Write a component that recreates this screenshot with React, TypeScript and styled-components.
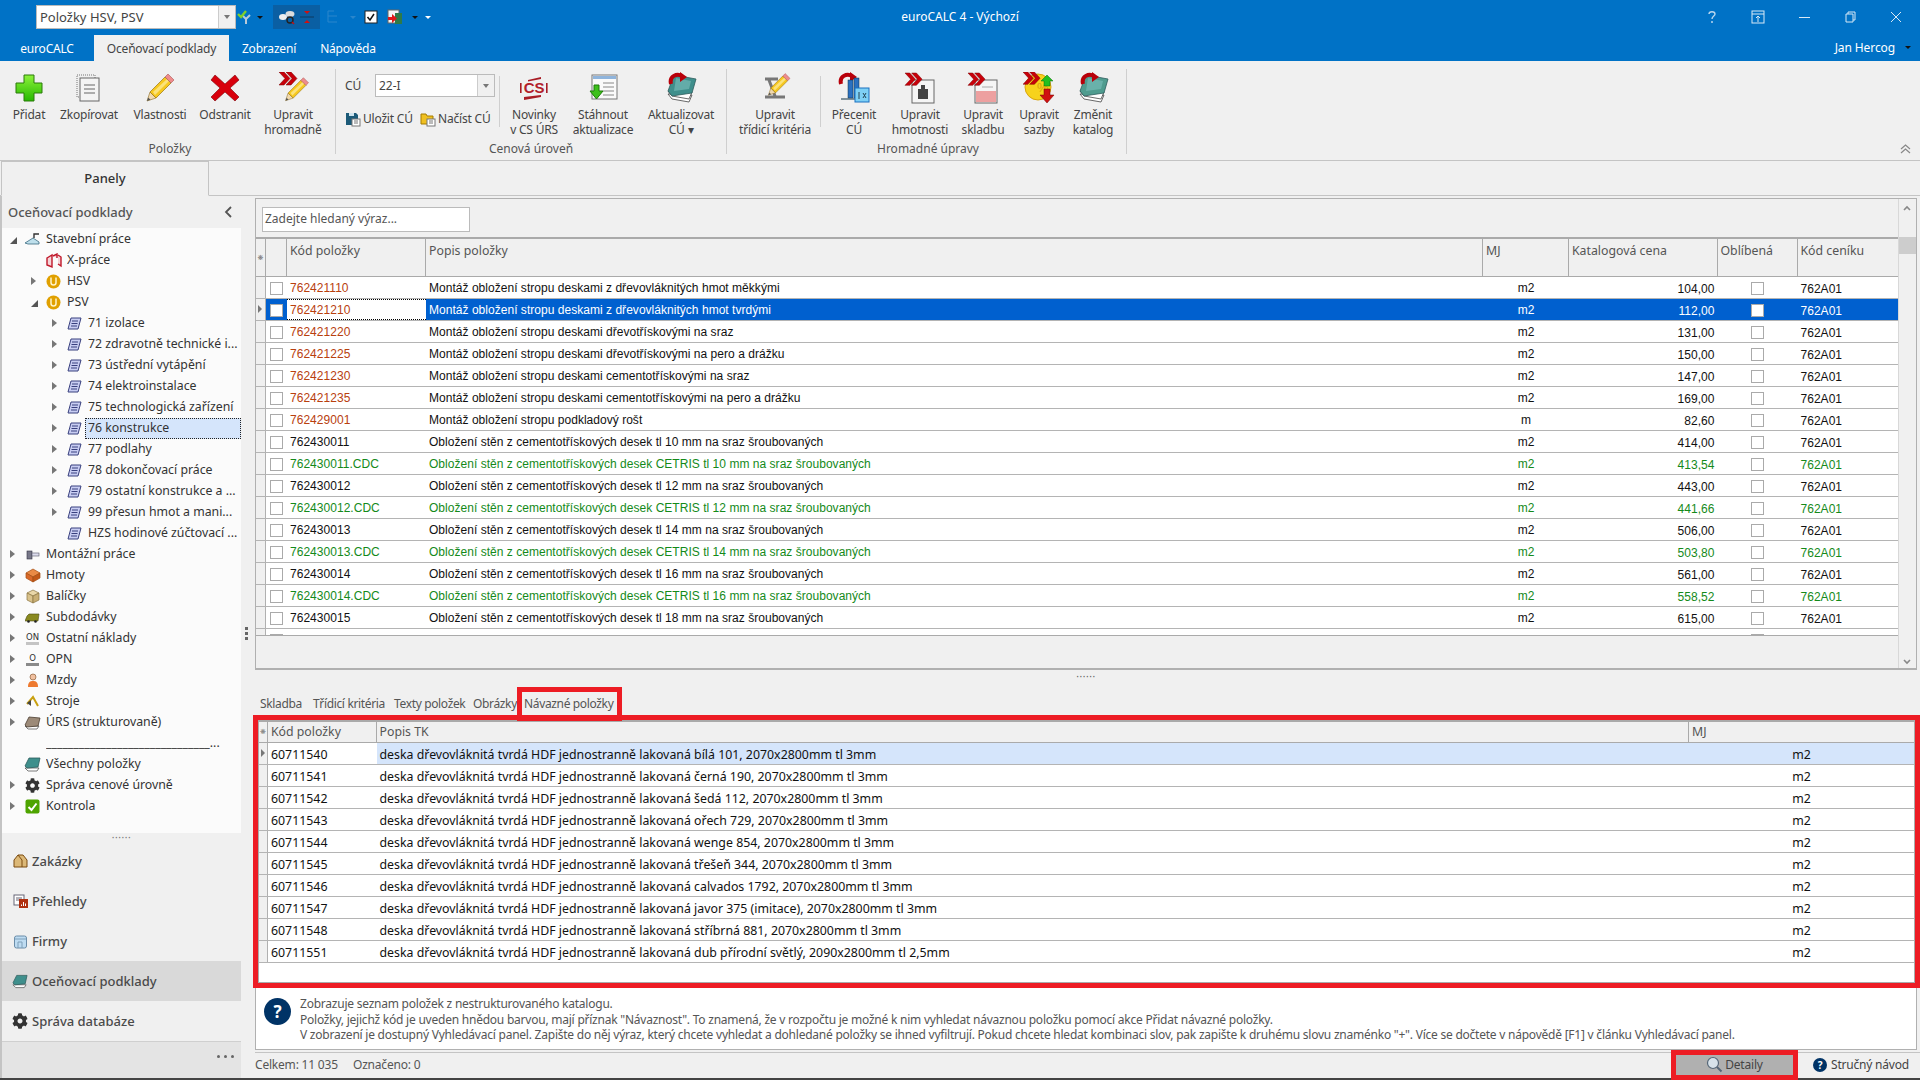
import React from 'react';
import styled, { createGlobalStyle } from 'styled-components';
import { FaCog } from 'react-icons/fa';

const UI = '"Noto Sans", "Open Sans", sans-serif';
const TOP_COLS = '10px 21px 139px 1057px 86px 148.5px 80px 1fr';
const DETAIL_COLS = '9px 108.5px 1312.5px 1fr';
const RED = '#ed1c24';

const Global = createGlobalStyle`
  html, body { margin: 0; background: #f0f0f0; }
  *, *::before, *::after { box-sizing: border-box; }
`;

/* ─── Shell ─────────────────────────── */

const Root = styled.div`
  width: 1920px;
  height: 1080px;
  overflow: hidden;
  display: flex;
  flex-direction: column;
  font-family: ${UI};
  font-size: 12px;
  background: #f0f0f0;
  color: #444;
`;

const TitleBar = styled.div`
  height: 35px;
  background: #0072c6;
  display: grid;
  grid-template-columns: 1fr auto 1fr;
  align-items: start;
`;

const Qat = styled.div`
  display: flex;
  align-items: center;
  height: 24px;
  margin-top: 5px;
  padding-left: 36px;
`;

const QatCombo = styled.div`
  width: 200px;
  height: 24px;
  background: #fff;
  border: 1px solid #bbb;
  color: #444;
  font-size: 13px;
  line-height: 22px;
  padding-left: 3px;
  display: flex;
  justify-content: space-between;
`;

const ComboArrow = styled.div`
  width: 17px;
  border-left: 1px solid #ccc;
  background: #f0f0f0;
  display: flex;
  align-items: center;
  justify-content: center;
  &::after {
    content: '';
    border: 3px solid transparent;
    border-top: 4px solid #777;
    border-bottom: 0;
  }
`;

const QatSlot = styled.div<{ $w: number; $on?: boolean }>`
  width: ${({ $w }) => $w}px;
  height: 24px;
  display: flex;
  align-items: center;
  justify-content: center;
  gap: 3px;
  background: ${({ $on }) => ($on ? '#0a5fa3' : 'transparent')};
`;

const Caret = styled.span<{ $c?: string }>`
  border: 3px solid transparent;
  border-top: 3px solid ${({ $c }) => $c ?? '#111'};
  border-bottom: 0;
`;

const WindowTitle = styled.div`
  color: #fff;
  font-size: 12px;
  line-height: 34px;
`;

const WindowControls = styled.div`
  display: flex;
  justify-content: flex-end;
  padding: 8px 1px 0 0;
`;

const WinBtn = styled.div<{ $w: number }>`
  width: ${({ $w }) => $w}px;
  height: 18px;
  display: flex;
  align-items: center;
  justify-content: center;
  color: #cfe4f5;
`;

const TabStrip = styled.div`
  height: 26px;
  background: #0072c6;
  display: flex;
  align-items: stretch;
`;

const RibbonTab = styled.div<{ $w: number; $active?: boolean }>`
  width: ${({ $w }) => $w}px;
  text-align: center;
  line-height: 27px;
  font-size: 12px;
  letter-spacing: -0.2px;
  color: ${({ $active }) => ($active ? '#444' : '#fff')};
  background: ${({ $active }) => ($active ? '#f0f0f0' : 'transparent')};
`;

const UserName = styled.div`
  margin-left: auto;
  padding-right: 9px;
  display: flex;
  align-items: center;
  gap: 10px;
  color: #fff;
  font-size: 12px;
  letter-spacing: -0.1px;
  height: 24px;
`;

/* ─── Ribbon ────────────────────────── */

const Ribbon = styled.div`
  height: 100px;
  display: flex;
  align-items: flex-start;
  border-bottom: 1px solid #c4c4c4;
`;

const Group = styled.div<{ $w: number; $pad?: number }>`
  width: ${({ $w }) => $w}px;
  height: 85px;
  margin-top: 8px;
  border-right: 1px solid #cfcfcf;
  display: flex;
  flex-direction: column;
  padding-left: ${({ $pad }) => $pad ?? 0}px;
`;

const GroupBody = styled.div`
  height: 73px;
  display: flex;
  align-items: flex-start;
`;

const GroupLabel = styled.div`
  height: 12px;
  line-height: 14px;
  text-align: center;
  font-size: 12px;
  color: #555;
`;

const RibbonBtn = styled.div<{ $w: number }>`
  width: ${({ $w }) => $w}px;
  padding-top: 3px;
  display: flex;
  flex-direction: column;
  align-items: center;
  text-align: center;
  line-height: 15px;
  font-size: 12px;
  letter-spacing: -0.2px;
  color: #444;
  white-space: pre-line;
`;

const BtnIcon = styled.div`
  height: 32px;
  margin-bottom: 3px;
  display: flex;
  align-items: center;
  justify-content: center;
`;

const InnerSep = styled.div`
  width: 1px;
  height: 51px;
  margin-top: 7px;
  background: #cfcfcf;
`;

const CuBlock = styled.div`
  width: 163px;
  padding: 5px 0 0 9px;
  display: flex;
  flex-direction: column;
  gap: 10px;
`;

const CuRow = styled.div`
  display: flex;
  align-items: center;
  height: 23px;
`;

const CuLabel = styled.div`
  width: 30px;
`;

const CuCombo = styled.div`
  width: 120px;
  height: 23px;
  border: 1px solid #bbb;
  background: #fff;
  padding-left: 3px;
  line-height: 21px;
  display: flex;
  justify-content: space-between;
`;

const CuAction = styled.div<{ $w: number }>`
  width: ${({ $w }) => $w}px;
  display: flex;
  align-items: center;
  gap: 2px;
  letter-spacing: -0.2px;
  white-space: nowrap;
`;

const CollapseBtn = styled.div`
  margin: auto 9px 9px auto;
  align-self: flex-end;
  height: 10px;
`;

/* ─── Body ──────────────────────────── */

const PanelHead = styled.div`
  height: 35px;
  border-bottom: 1px solid #c4c4c4;
  display: flex;
  padding-left: 1px;
`;

const PanelTab = styled.div`
  width: 208px;
  height: 35px;
  background: #f0f0f0;
  border: 1px solid #c4c4c4;
  border-bottom-color: #f0f0f0;
  text-align: center;
  line-height: 33px;
  font-size: 13px;
  font-weight: 500;
  color: #333;
`;

const Body = styled.div`
  flex: 1;
  min-height: 0;
  display: flex;
`;

const Sidebar = styled.aside`
  width: 255px;
  display: flex;
  flex-direction: column;
  border-left: 2px solid #c4c4c4;
  position: relative;
`;

const SideHeader = styled.div`
  height: 32px;
  width: 239px;
  padding: 0 8px 0 6px;
  display: flex;
  align-items: center;
  justify-content: space-between;
  font-size: 13px;
  font-weight: 500;
  color: #555;
`;

const Tree = styled.div`
  width: 239px;
  height: 605px;
  padding-top: 1px;
  background: #fbfbfb;
  overflow: hidden;
`;

const TreeRow = styled.div<{ $level: number }>`
  height: 21px;
  display: flex;
  align-items: center;
  padding-left: ${({ $level }) => 6 + 21 * $level}px;
  color: #333;
  font-size: 12.3px;
  white-space: nowrap;
`;

const TreeArrow = styled.div<{ $state: string }>`
  width: 10px;
  height: 10px;
  position: relative;
  &::after {
    content: ${({ $state }) => ($state === 'none' ? 'none' : "''")};
    position: absolute;
    ${({ $state }) =>
      $state === 'open'
        ? `right: 1px; bottom: 1px; border-style: solid; border-width: 0 0 7px 7px;
           border-color: transparent transparent #555 transparent;`
        : `left: 2px; top: 0; border-style: solid; border-width: 4.5px 0 4.5px 5px;
           border-color: transparent transparent transparent #777;`}
  }
`;

const TreeIcon = styled.div`
  width: 17px;
  margin-left: 6px;
  height: 16px;
  display: flex;
  align-items: center;
  justify-content: center;
`;

const TreeText = styled.div<{ $sel?: boolean }>`
  margin-left: ${({ $sel }) => ($sel ? 2 : 5)}px;
  flex: 1;
  height: 21px;
  line-height: 20px;
  overflow: hidden;
  padding-left: ${({ $sel }) => ($sel ? 3 : 0)}px;
  background: ${({ $sel }) => ($sel ? '#d5e5fb' : 'transparent')};
  outline: ${({ $sel }) => ($sel ? '1px dotted #222' : 'none')};
  outline-offset: -1px;
`;

const SplitDots = styled.div`
  height: 8px;
  width: 239px;
  display: flex;
  justify-content: center;
  align-items: center;
  color: #777;
  font-size: 10px;
  letter-spacing: 0.6px;
  line-height: 4px;
`;

const SideNav = styled.nav`
  width: 239px;
`;

const NavItem = styled.div<{ $active?: boolean }>`
  height: 40px;
  display: flex;
  align-items: center;
  gap: 4px;
  padding-left: 10px;
  font-size: 13px;
  font-weight: 500;
  color: #4a4a4a;
  background: ${({ $active }) => ($active ? '#d9d9d9' : 'transparent')};
`;

const NavIcon = styled.div`
  width: 16px;
  display: flex;
  justify-content: center;
`;

const NavFooter = styled.div`
  flex: 1;
  width: 239px;
  border-top: 1px solid #cfcfcf;
  background: #e4e4e4;
  display: flex;
  justify-content: flex-end;
  align-items: center;
  padding: 0 7px 8px 0;
  gap: 4px;
`;

const NavDot = styled.span`
  width: 3px;
  height: 3px;
  border-radius: 50%;
  background: #666;
`;

const GripV = styled.div`
  position: absolute;
  left: 243px;
  top: 431px;
  display: flex;
  flex-direction: column;
  gap: 2px;
  & > i {
    width: 3px;
    height: 3px;
    background: #666;
    display: block;
  }
`;

const Main = styled.main`
  flex: 1;
  min-width: 0;
  display: flex;
  flex-direction: column;
  padding-top: 2px;
`;

const TopPanel = styled.section`
  height: 472px;
  margin-right: 3px;
  border: 1px solid #b0b0b0;
  border-bottom-width: 2px;
  display: flex;
`;

const TopLeft = styled.div`
  flex: 1;
  min-width: 0;
  display: flex;
  flex-direction: column;
`;

const SearchZone = styled.div`
  height: 38px;
  padding: 8px 0 0 6px;
`;

const SearchBox = styled.div`
  width: 208px;
  height: 25px;
  background: #fff;
  border: 1px solid #bbb;
  padding-left: 2px;
  line-height: 22px;
  color: #555;
  font-size: 12px;
`;

const Scrollbar = styled.div`
  width: 18px;
  border-left: 1px solid #d8d8d8;
  background: #f0f0f0;
  display: flex;
  flex-direction: column;
  align-items: center;
  position: relative;
`;

const ScrollThumb = styled.div`
  position: absolute;
  left: 0;
  top: 38px;
  width: 100%;
  height: 17px;
  background: #cdcdcd;
`;

const ScrollArrow = styled.div<{ $down?: boolean }>`
  position: absolute;
  ${({ $down }) => ($down ? 'bottom: 3px;' : 'top: 6px;')}
  left: 4px;
  line-height: 0;
`;

const HeadRow = styled.div<{ $cols: string; $h: number }>`
  height: ${({ $h }) => $h}px;
  display: grid;
  grid-template-columns: ${({ $cols }) => $cols};
  border-top: 2px solid #aaa;
  border-bottom: 1px solid #aaa;
  background: #f0f0f0;
  color: #555;
`;

const HeadCell = styled.div<{ $top?: boolean }>`
  border-right: 1px solid #aaa;
  padding: ${({ $top }) => ($top ? '4px' : '2px')} 3px 0;
  font-size: 12.3px;
  line-height: 16px;
  white-space: nowrap;
  overflow: hidden;
  &:last-child {
    border-right: 0;
  }
`;

const StarCell = styled.div`
  border-right: 1px solid #aaa;
  display: flex;
  align-items: center;
  justify-content: center;
  font-family: 'DejaVu Sans', sans-serif;
  font-size: 7px;
  color: #777;
`;

const Rows = styled.div<{ $h: number }>`
  height: ${({ $h }) => $h}px;
  overflow: hidden;
  background: #fff;
  border-bottom: 1px solid #aaa;
`;

const Row = styled.div<{ $cols: string; $sel?: boolean }>`
  height: 22px;
  display: grid;
  grid-template-columns: ${({ $cols }) => $cols};
  border-bottom: 1px solid #b4b4b4;
  align-items: stretch;
  position: relative;
`;

const Indicator = styled.div<{ $mark?: boolean }>`
  background: #f0f0f0;
  border-right: 1px solid #b0b0b0;
  position: relative;
  &::after {
    content: ${({ $mark }) => ($mark ? "''" : 'none')};
    position: absolute;
    left: 2px;
    top: 6px;
    border-style: solid;
    border-width: 4px 0 4px 4px;
    border-color: transparent transparent transparent #777;
  }
`;

const Cell = styled.div<{
  $c?: string;
  $bg?: string;
  $align?: string;
  $focus?: boolean;
  $size?: number;
  $drop?: number;
}>`
  padding: ${({ $drop }) => $drop ?? 1}px 3px 0;
  line-height: 21px;
  white-space: nowrap;
  overflow: hidden;
  font-family: ${({ $size }) => ($size ? UI : '"Liberation Sans", sans-serif')};
  font-size: ${({ $size }) => $size ?? 12}px;
  letter-spacing: ${({ $size }) => ($size ? '0' : '0.03px')};
  text-align: ${({ $align }) => $align ?? 'left'};
  color: ${({ $c }) => $c ?? '#111'};
  background: ${({ $bg }) => $bg ?? 'transparent'};
  border-top: ${({ $focus }) => ($focus ? '1px dotted #000' : '0')};
  border-bottom: ${({ $focus }) => ($focus ? '1px dotted #000' : '0')};
`;

const CheckCell = styled.div<{ $bg?: string }>`
  display: flex;
  align-items: center;
  padding: 1px 0 0 4px;
  background: ${({ $bg }) => $bg ?? 'transparent'};
`;

const Check = styled.div`
  width: 13px;
  height: 13px;
  background: #fff;
  border: 1px solid #aaa;
`;

const CheckCenter = styled(CheckCell)`
  justify-content: center;
  padding-left: 0;
`;

const FillBar = styled.div`
  flex: 1;
`;

const DotsRow = styled.div`
  height: 12px;
  margin-top: 2px;
  text-align: center;
  font-size: 10px;
  line-height: 8px;
  color: #666;
  letter-spacing: 0.6px;
  padding-right: 3px;
`;

const DetailTabs = styled.div`
  height: 31px;
  display: flex;
  align-items: flex-end;
  padding: 0 0 3px 5px;
  color: #555;
  font-size: 12px;
  letter-spacing: -0.35px;
`;

const DetailTab = styled.div<{ $w: number; $marked?: boolean }>`
  width: ${({ $w }) => $w}px;
  position: relative;
  white-space: nowrap;
  line-height: 16px;
  &::after {
    content: ${({ $marked }) => ($marked ? "''" : 'none')};
    position: absolute;
    left: -7px;
    top: -9px;
    width: 105px;
    height: 34px;
    border: 5px solid ${RED};
    z-index: 2;
  }
`;

const DetailFrame = styled.section`
  height: 273px;
  margin-left: -2px;
  border: 5px solid ${RED};
`;

const DetailInner = styled.div`
  height: 263px;
  border: 1px solid #aaa;
  border-top: 0;
  background: #fff;
  display: flex;
  flex-direction: column;
`;

const HelpPanel = styled.div`
  height: 62px;
  margin-right: 3px;
  background: #fff;
  border: 1px solid #b0b0b0;
  border-top: 0;
  display: flex;
  padding: 9px 0 0 8px;
  gap: 9px;
  color: #555;
  font-size: 12px;
  line-height: 15.5px;
  letter-spacing: -0.23px;
`;

const HelpMark = styled.div`
  width: 27px;
  height: 27px;
  border-radius: 50%;
  background: #003366;
  color: #fff;
  font-weight: 700;
  font-size: 17px;
  line-height: 27px;
  text-align: center;
  flex-shrink: 0;
  margin-top: 1px;
`;

const HelpText = styled.div`
  white-space: nowrap;
  margin-top: -1px;
`;

const StatusBar = styled.div`
  flex: 1;
  margin-top: 2px;
  border-top: 1px solid #c4c4c4;
  display: flex;
  align-items: center;
  padding-bottom: 2px;
  color: #555;
  font-size: 12px;
  letter-spacing: -0.2px;
`;

const StatusText = styled.div<{ $w: number }>`
  width: ${({ $w }) => $w}px;
  white-space: nowrap;
`;

const DetailBtn = styled.div`
  margin-left: auto;
  width: 117px;
  height: 20px;
  background: #b0b0b0;
  display: flex;
  align-items: center;
  justify-content: center;
  gap: 2px;
  position: relative;
  color: #444;
  &::after {
    content: '';
    position: absolute;
    inset: -5px;
    border: 5px solid ${RED};
  }
`;

const GuideBtn = styled.div`
  width: 127px;
  padding-left: 20px;
  display: flex;
  align-items: center;
  gap: 4px;
  color: #444;
`;

const GuideMark = styled.span`
  width: 14px;
  height: 14px;
  border-radius: 50%;
  background: #003366;
  color: #fff;
  font-weight: 700;
  font-size: 10px;
  line-height: 14px;
  text-align: center;
`;

const BottomEdge = styled.div`
  height: 2px;
  background: #444;
`;

/* ─── Icon pieces ───────────────────── */

const Pencil = ({ x = 0, y = 0, s = 1 }: { x?: number; y?: number; s?: number }) => (
  <g transform={`translate(${x} ${y}) scale(${s})`}>
    <polygon points="3,29 6,20 12,26" fill="#f0d9b0" stroke="#8a6a20" strokeWidth="0.6" />
    <polygon points="3,29 4.2,25.5 6.5,27.8" fill="#555" />
    <polygon points="6,20 21,5 27,11 12,26" fill="#f6c81e" stroke="#9a7410" strokeWidth="0.7" />
    <polygon points="9,20 23,7 25,9 11,23" fill="#fbe27a" />
    <polygon points="21,5 24,2 30,8 27,11" fill="#ee8c8c" stroke="#a55" strokeWidth="0.6" />
  </g>
);

const Chevrons = ({ x = 0, y = 0, s = 1 }: { x?: number; y?: number; s?: number }) => (
  <g transform={`translate(${x} ${y}) scale(${s})`} fill="#c8000a" stroke="#700" strokeWidth="0.5">
    <polygon points="0,0 5,0 11,6.5 5,13 0,13 6,6.5" />
    <polygon points="7,0 12,0 18,6.5 12,13 7,13 13,6.5" />
  </g>
);

const RedTurn = ({ x = 0, y = 0 }: { x?: number; y?: number }) => (
  <g transform={`translate(${x} ${y})`}>
    <path d="M3 12 C1 4 9 1 14 4" fill="none" stroke="#b8000a" strokeWidth="4" />
    <polygon points="12,0 19,5 12,10" fill="#b8000a" />
  </g>
);

const TealBook = ({ x = 0, y = 0, c = '#3f8f8c' }: { x?: number; y?: number; c?: string }) => (
  <g transform={`translate(${x} ${y})`}>
    <polygon points="3,22 7,27 24,30 27,23" fill="#fff" stroke="#444" strokeWidth="0.8" />
    <polygon points="3,19 7,24 24,27 27,20" fill="#fff" stroke="#444" strokeWidth="0.8" />
    <polygon points="9,3 31,7 27,21 7,24 3,19" fill={c} stroke="#2c5c5c" strokeWidth="0.8" />
    <polygon points="11,6 26,9 24,17 9,19" fill="#7cc0bd" opacity="0.6" />
  </g>
);

const Icon32 = ({ children }: { children: React.ReactNode }) => (
  <svg width="32" height="32" viewBox="0 0 32 32">
    {children}
  </svg>
);

const PlusIcon = () => (
  <Icon32>
    <defs>
      <linearGradient id="gp" x1="0" y1="0" x2="0" y2="1">
        <stop offset="0" stopColor="#8cf23a" />
        <stop offset="1" stopColor="#26b800" />
      </linearGradient>
    </defs>
    <polygon
      points="11,3 21,3 21,11 29,11 29,21 21,21 21,29 11,29 11,21 3,21 3,11 11,11"
      fill="url(#gp)"
      stroke="#2b7a0b"
    />
  </Icon32>
);

const CopyIcon = () => (
  <Icon32>
    <rect x="4" y="3" width="18" height="22" fill="none" stroke="#777" strokeDasharray="1 1" />
    <rect x="7" y="6" width="19" height="23" fill="#f4f4f4" stroke="#666" />
    <path d="M11 13h11M11 17h11M11 21h11" stroke="#666" />
  </Icon32>
);

const PencilIcon = () => (
  <Icon32>
    <Pencil />
  </Icon32>
);

const CrossIcon = () => (
  <Icon32>
    <polygon
      points="6,3 16,12 26,3 30,8 21,16 30,25 26,29 16,20 6,29 2,25 11,16 2,8"
      fill="#d8000c"
      stroke="#7a0006"
      strokeWidth="0.6"
    />
  </Icon32>
);

const BulkPencilIcon = () => (
  <Icon32>
    <Chevrons x={2} y={0} s={1} />
    <Pencil x={6} y={4} s={0.85} />
  </Icon32>
);

const CsIcon = () => (
  <svg width="34" height="32" viewBox="0 0 34 32">
    <polygon points="11,8 24,5 24,7 11,9.5" fill="#a81c24" />
    <polygon points="7,25 24,23 24,25 7,28" fill="#a81c24" />
    <rect x="3" y="11" width="1.6" height="10" fill="#a81c24" />
    <rect x="29" y="11" width="1.6" height="10" fill="#a81c24" />
    <text
      x="17"
      y="21"
      textAnchor="middle"
      fontFamily="'Liberation Sans', sans-serif"
      fontWeight="700"
      fontSize="15"
      fill="#b3202a"
    >
      CS
    </text>
  </svg>
);

const DownloadIcon = () => (
  <Icon32>
    <rect x="5" y="3" width="25" height="24" fill="#fafafa" stroke="#777" />
    <rect x="6" y="4" width="23" height="3" fill="#8fb4dc" />
    <path d="M16 11h11M16 15h11M16 19h11M16 23h11" stroke="#888" />
    <polygon points="3,19 7,19 7,13 12,13 12,19 16,19 9.5,27" fill="#3cc01a" stroke="#1d7a08" />
  </Icon32>
);

const RefreshBookIcon = () => (
  <Icon32>
    <TealBook />
    <RedTurn x={3} y={0} />
  </Icon32>
);

const SortIcon = () => (
  <Icon32>
    <path d="M6 7h13M10 8l6 16M6 25h20" stroke="#777" strokeWidth="3" fill="none" />
    <Pencil x={7} y={0} s={0.8} />
  </Icon32>
);

const RepriceIcon = () => (
  <Icon32>
    <RedTurn x={0} y={0} />
    <rect x="10" y="8" width="5" height="18" fill="#2a70c0" stroke="#134" strokeWidth="0.5" />
    <rect x="16" y="6" width="5" height="20" fill="#2a70c0" stroke="#134" strokeWidth="0.5" />
    <path d="M3 27h20" stroke="#134" />
    <rect x="17" y="16" width="14" height="14" fill="#7ed0f5" stroke="#1a70c0" />
    <path d="M21 20v7M25 21l3 5M28 21l-3 5" stroke="#245" fill="none" />
  </Icon32>
);

const WeightIcon = () => (
  <Icon32>
    <rect x="8" y="8" width="22" height="23" fill="#f5f5f5" stroke="#666" />
    <rect x="14" y="17" width="10" height="10" fill="#444" />
    <rect x="17" y="13" width="4" height="4" fill="#444" />
    <Chevrons x={1} y={1} s={0.95} />
  </Icon32>
);

const CompositionIcon = () => (
  <Icon32>
    <rect x="8" y="8" width="22" height="23" fill="#f5f5f5" stroke="#666" />
    <rect x="9" y="19" width="20" height="11" fill="#eda0a0" />
    <path d="M15 15h11" stroke="#aaa" />
    <Chevrons x={1} y={1} s={0.95} />
  </Icon32>
);

const RatesIcon = () => (
  <Icon32>
    <circle cx="15" cy="15" r="13" fill="#f7d21c" stroke="#d9a40b" />
    <text x="14" y="20" fontSize="13" fontFamily="'Liberation Sans', sans-serif" fill="#d9a40b">
      %
    </text>
    <polygon points="24,3 30,9 27,9 27,14 21,14 21,9 18,9" fill="#22c020" stroke="#0a6a0a" strokeWidth="0.5" />
    <polygon points="21,17 27,17 27,23 31,23 24,31 17,23 21,23" fill="#d01010" stroke="#700" strokeWidth="0.5" />
    <Chevrons x={0} y={0} s={0.95} />
  </Icon32>
);

const ChangeBookIcon = () => (
  <Icon32>
    <TealBook c="#4f9c8f" />
    <RedTurn x={3} y={0} />
  </Icon32>
);

const SaveIcon = () => (
  <svg width="16" height="16" viewBox="0 0 16 16">
    <path d="M1 2h10l2 2v10H1z" fill="#1c5a78" />
    <rect x="4" y="2" width="5" height="3" fill="#cfe4ee" />
    <rect x="7" y="8" width="8" height="7" fill="#fff" stroke="#777" />
    <path d="M9 10h4M9 12h4" stroke="#777" />
  </svg>
);

const LoadIcon = () => (
  <svg width="16" height="16" viewBox="0 0 16 16">
    <path d="M1 3h5l1 2h6v8H1z" fill="#f0c020" stroke="#a67c00" />
    <rect x="7" y="8" width="8" height="7" fill="#fff" stroke="#777" />
    <path d="M9 10h4M9 12h4" stroke="#777" />
  </svg>
);

const FilterCheckIcon = () => (
  <svg width="16" height="16" viewBox="0 0 16 16">
    <path d="M5 6l4 4v5M13 6l-4 4" stroke="#b8c9d8" strokeWidth="2" fill="none" />
    <path d="M1 5l3 3 5-6" stroke="#7fd02a" strokeWidth="2.4" fill="none" />
  </svg>
);

const BinocularsIcon = () => (
  <svg width="18" height="16" viewBox="0 0 18 16">
    <ellipse cx="5" cy="8" rx="4" ry="3" fill="#eee" />
    <ellipse cx="12" cy="5" rx="4.5" ry="3" fill="#ddd" />
    <circle cx="12" cy="11" r="3" fill="none" stroke="#222" strokeWidth="1.4" />
    <path d="M14 13l2 2" stroke="#c01010" strokeWidth="1.6" />
  </svg>
);

const SplitIcon = () => (
  <svg width="16" height="16" viewBox="0 0 16 16">
    <path d="M1 8h14" stroke="#0d3a60" />
    <polygon points="5,2 11,2 8,5" fill="#d01010" />
    <polygon points="5,14 11,14 8,11" fill="#d01010" />
  </svg>
);

const TreeDisabledIcon = () => (
  <svg width="14" height="14" viewBox="0 0 14 14">
    <path d="M2 1h6M2 1v11M2 6h9M2 12h9" stroke="#2a86cc" fill="none" />
  </svg>
);

const CheckboxQatIcon = () => (
  <svg width="14" height="14" viewBox="0 0 14 14">
    <rect x="1" y="1" width="12" height="12" fill="#fff" stroke="#222" />
    <path d="M3.5 7l2.5 3 4-6" stroke="#111" strokeWidth="1.5" fill="none" />
  </svg>
);

const ExportIcon = () => (
  <svg width="16" height="16" viewBox="0 0 16 16">
    <rect x="1" y="1" width="11" height="13" fill="#f4f4f4" stroke="#666" />
    <rect x="8" y="4" width="7" height="11" fill="#2e7a48" />
    <polygon points="1,8 5,8 5,5 10,9.5 5,14 5,11 1,11" fill="#e01818" />
  </svg>
);

const HelpGlyph = () => (
  <svg width="12" height="14" viewBox="0 0 12 14">
    <path d="M3 4c0-3 6-3 6 0 0 2-3 2-3 5" fill="none" stroke="#b9d6ee" strokeWidth="1.4" />
    <circle cx="6" cy="12" r="1" fill="#b9d6ee" />
  </svg>
);

const PinGlyph = () => (
  <svg width="14" height="14" viewBox="0 0 14 14">
    <rect x="1" y="1" width="12" height="12" fill="none" stroke="#d8e9f6" />
    <path d="M1 4h12M7 12V6M5 8l2-2 2 2" fill="none" stroke="#d8e9f6" />
  </svg>
);

const MinGlyph = () => (
  <svg width="11" height="3" viewBox="0 0 11 3">
    <path d="M0 1.5h11" stroke="#d8e9f6" />
  </svg>
);

const RestoreGlyph = () => (
  <svg width="11" height="12" viewBox="0 0 11 12">
    <path d="M3 3V1h7v8H8M1 3h7v8H1z" fill="none" stroke="#d8e9f6" />
  </svg>
);

const CloseGlyph = () => (
  <svg width="12" height="12" viewBox="0 0 12 12">
    <path d="M1 1l10 10M11 1L1 11" stroke="#d8e9f6" />
  </svg>
);

const DoubleUp = () => (
  <svg width="11" height="10" viewBox="0 0 11 10">
    <path d="M1 5l4.5-4 4.5 4M1 9l4.5-4 4.5 4" fill="none" stroke="#888" strokeWidth="1.2" />
  </svg>
);

const Chev = ({ d }: { d: string }) => (
  <svg width="8" height="6" viewBox="0 0 8 6">
    <path d={d} fill="none" stroke="#888" strokeWidth="1.6" />
  </svg>
);

const TrowelIcon = () => (
  <svg width="16" height="14" viewBox="0 0 16 14">
    <polygon points="0,10 8,5 14,9 14,11 3,11" fill="#bfe0ec" stroke="#3a6a80" strokeWidth="0.8" />
    <path d="M9 5V1h5" fill="none" stroke="#333" strokeWidth="1.4" />
  </svg>
);

const XWorkIcon = () => (
  <svg width="16" height="16" viewBox="0 0 16 16">
    <path d="M1 5l5-3v12l-5-2zM7 3l4-2v4M12 2l3 2v9l-3-2" fill="#f4d4d8" stroke="#c0182a" strokeWidth="1.4" />
  </svg>
);

const CoinIcon = () => (
  <svg width="15" height="15" viewBox="0 0 15 15">
    <circle cx="7.5" cy="7.5" r="7" fill="#e0a000" />
    <path d="M5 3.5v5a2.5 2.5 0 0 0 5 0v-5" fill="none" stroke="#fff3c8" strokeWidth="1.5" />
  </svg>
);

const CatalogIcon = () => (
  <svg width="15" height="14" viewBox="0 0 15 14">
    <polygon points="4,1 14,1 11,12 1,12" fill="#c8cdf2" stroke="#39407e" />
    <path d="M5 4h6M4.5 6.5h6M4 9h6" stroke="#39407e" />
  </svg>
);

const MachineIcon = () => (
  <svg width="14" height="10" viewBox="0 0 14 10">
    <rect x="1" y="1" width="5" height="8" fill="#778" stroke="#334" strokeWidth="0.6" />
    <rect x="6" y="3" width="7" height="3" fill="#dde" stroke="#556" strokeWidth="0.6" />
  </svg>
);

const BrickIcon = () => (
  <svg width="16" height="15" viewBox="0 0 16 15">
    <polygon points="1,5 8,1 15,5 8,9" fill="#ea8a45" stroke="#a44e12" strokeWidth="0.7" />
    <polygon points="1,5 8,9 8,14 1,10" fill="#d9692a" stroke="#a44e12" strokeWidth="0.7" />
    <polygon points="15,5 8,9 8,14 15,10" fill="#c25818" stroke="#a44e12" strokeWidth="0.7" />
  </svg>
);

const BoxIcon = () => (
  <svg width="14" height="15" viewBox="0 0 14 15">
    <polygon points="1,4 7,1 13,4 7,7" fill="#e9d6a8" stroke="#8a7440" strokeWidth="0.7" />
    <polygon points="1,4 7,7 7,14 1,11" fill="#d9c28c" stroke="#8a7440" strokeWidth="0.7" />
    <polygon points="13,4 7,7 7,14 13,11" fill="#c8ae74" stroke="#8a7440" strokeWidth="0.7" />
  </svg>
);

const VanIcon = () => (
  <svg width="15" height="10" viewBox="0 0 15 10">
    <polygon points="0,8 2,3 4,1 14,1 13,8" fill="#8a8a20" stroke="#4c4c10" strokeWidth="0.6" />
    <circle cx="3.5" cy="8.5" r="1.3" fill="#222" />
    <circle cx="10.5" cy="8.5" r="1.3" fill="#222" />
  </svg>
);

const CostIcon = ({ t, c }: { t: string; c: string }) => (
  <svg width="15" height="13" viewBox="0 0 15 13">
    <text x="7.5" y="8" textAnchor="middle" fontSize="8.5" fontFamily="'DejaVu Sans', sans-serif" fill="#333">
      {t}
    </text>
    <rect x="1" y="10" width="13" height="3" fill={c} />
  </svg>
);

const PersonIcon = () => (
  <svg width="14" height="15" viewBox="0 0 14 15">
    <circle cx="7" cy="4" r="3" fill="#f0c0a0" stroke="#7a4a20" strokeWidth="0.6" />
    <path d="M2 14c0-5 2-6 5-6s5 1 5 6z" fill="#ee7a30" />
  </svg>
);

const DiggerIcon = () => (
  <svg width="14" height="14" viewBox="0 0 14 14">
    <path d="M1 9l6-7 5 9" fill="none" stroke="#c9a010" strokeWidth="2" />
    <path d="M1 8l4-3v6z" fill="#444" />
  </svg>
);

const BrownBookIcon = () => (
  <svg width="17" height="14" viewBox="0 0 17 14">
    <polygon points="1,10 4,13 13,13 15,10" fill="#fff" stroke="#444" strokeWidth="0.7" />
    <polygon points="5,1 16,2 14,10 3,11 1,9" fill="#9c8a78" stroke="#4a3c2e" strokeWidth="0.8" />
  </svg>
);

const SmallTealBook = () => (
  <svg width="17" height="15" viewBox="0 0 17 15">
    <polygon points="1,11 4,14 13,14 15,11" fill="#fff" stroke="#444" strokeWidth="0.7" />
    <polygon points="5,1 16,1 14,10 3,11 1,9" fill="#3f8f8c" stroke="#2c5c5c" strokeWidth="0.8" />
  </svg>
);

const GreenCheckIcon = () => (
  <svg width="15" height="15" viewBox="0 0 15 15">
    <rect x="0.5" y="0.5" width="14" height="14" rx="2" fill="#4ea400" />
    <path d="M3.5 8l3 3 5-6.5" fill="none" stroke="#fff" strokeWidth="2" />
  </svg>
);

const HouseIcon = () => (
  <svg width="15" height="14" viewBox="0 0 15 14">
    <path d="M1 13V6l4-5h5l4 5v7z" fill="#dcb877" stroke="#7a4a10" />
    <path d="M5 1l4 5v7" fill="none" stroke="#7a4a10" />
  </svg>
);

const ReportIcon = () => (
  <svg width="15" height="14" viewBox="0 0 15 14">
    <rect x="1" y="1" width="10" height="10" fill="#fff" stroke="#667" />
    <path d="M3 4h6M3 6h4" stroke="#667" />
    <rect x="6" y="5" width="9" height="9" fill="#b03010" />
    <path d="M8.5 12v-1.5M10.5 12V8M12.5 12V9.5" stroke="#fff" />
  </svg>
);

const CompanyIcon = () => (
  <svg width="15" height="15" viewBox="0 0 15 15">
    <rect x="1.5" y="2" width="12" height="12" rx="2" fill="#bedcf2" stroke="#6a8ca8" />
    <path d="M1.5 5h12M5 14V8h4v6" fill="none" stroke="#7fa0ba" />
  </svg>
);

const MagnifierIcon = () => (
  <svg width="17" height="17" viewBox="0 0 17 17">
    <circle cx="7" cy="7" r="5.5" fill="#d7e2ea" stroke="#567" strokeWidth="1.2" />
    <path d="M11 11l4.5 4.5" stroke="#567" strokeWidth="2" />
  </svg>
);

/* ─── Data ──────────────────────────── */

const BROWN = '#b8400e';
const GREEN = '#148a1a';
const SEL = '#0060cf';

type TreeItem = {
  level: number;
  state: 'open' | 'closed' | 'none';
  icon: React.ReactNode;
  label: string;
  selected?: boolean;
};

const cat = <CatalogIcon />;

const TREE: TreeItem[] = [
  { level: 0, state: 'open', icon: <TrowelIcon />, label: 'Stavební práce' },
  { level: 1, state: 'none', icon: <XWorkIcon />, label: 'X-práce' },
  { level: 1, state: 'closed', icon: <CoinIcon />, label: 'HSV' },
  { level: 1, state: 'open', icon: <CoinIcon />, label: 'PSV' },
  { level: 2, state: 'closed', icon: cat, label: '71 izolace' },
  { level: 2, state: 'closed', icon: cat, label: '72 zdravotně technické i...' },
  { level: 2, state: 'closed', icon: cat, label: '73 ústřední vytápění' },
  { level: 2, state: 'closed', icon: cat, label: '74 elektroinstalace' },
  { level: 2, state: 'closed', icon: cat, label: '75 technologická zařízení' },
  { level: 2, state: 'closed', icon: cat, label: '76 konstrukce', selected: true },
  { level: 2, state: 'closed', icon: cat, label: '77 podlahy' },
  { level: 2, state: 'closed', icon: cat, label: '78 dokončovací práce' },
  { level: 2, state: 'closed', icon: cat, label: '79 ostatní konstrukce a ...' },
  { level: 2, state: 'closed', icon: cat, label: '99 přesun hmot a mani...' },
  { level: 2, state: 'none', icon: cat, label: 'HZS hodinové zúčtovací ...' },
  { level: 0, state: 'closed', icon: <MachineIcon />, label: 'Montážní práce' },
  { level: 0, state: 'closed', icon: <BrickIcon />, label: 'Hmoty' },
  { level: 0, state: 'closed', icon: <BoxIcon />, label: 'Balíčky' },
  { level: 0, state: 'closed', icon: <VanIcon />, label: 'Subdodávky' },
  { level: 0, state: 'closed', icon: <CostIcon t="ON" c="#c4c4c4" />, label: 'Ostatní náklady' },
  { level: 0, state: 'closed', icon: <CostIcon t="O" c="#8a8a8a" />, label: 'OPN' },
  { level: 0, state: 'closed', icon: <PersonIcon />, label: 'Mzdy' },
  { level: 0, state: 'closed', icon: <DiggerIcon />, label: 'Stroje' },
  { level: 0, state: 'closed', icon: <BrownBookIcon />, label: 'ÚRS (strukturovaně)' },
  { level: 0, state: 'none', icon: null, label: '______________________________...' },
  { level: 0, state: 'none', icon: <SmallTealBook />, label: 'Všechny položky' },
  { level: 0, state: 'closed', icon: <FaCog size={15} color="#333" />, label: 'Správa cenové úrovně' },
  { level: 0, state: 'closed', icon: <GreenCheckIcon />, label: 'Kontrola' },
];

const NAV = [
  { icon: <HouseIcon />, label: 'Zakázky' },
  { icon: <ReportIcon />, label: 'Přehledy' },
  { icon: <CompanyIcon />, label: 'Firmy' },
  { icon: <SmallTealBook />, label: 'Oceňovací podklady', active: true },
  { icon: <FaCog size={16} color="#333" />, label: 'Správa databáze' },
];

const S = 'Montáž obložení stropu ';
const D = 'Obložení stěn z cementotřískových desek ';
const SR = 'na sraz šroubovaných';

const ITEMS: { code: string; text: string; mj: string; price: string; kind: 'b' | 'g' | 'k' }[] = [
  { code: '762421110', text: S + 'deskami z dřevovláknitých hmot měkkými', mj: 'm2', price: '104,00', kind: 'b' },
  { code: '762421210', text: S + 'deskami z dřevovláknitých hmot tvrdými', mj: 'm2', price: '112,00', kind: 'b' },
  { code: '762421220', text: S + 'deskami dřevotřískovými na sraz', mj: 'm2', price: '131,00', kind: 'b' },
  { code: '762421225', text: S + 'deskami dřevotřískovými na pero a drážku', mj: 'm2', price: '150,00', kind: 'b' },
  { code: '762421230', text: S + 'deskami cementotřískovými na sraz', mj: 'm2', price: '147,00', kind: 'b' },
  { code: '762421235', text: S + 'deskami cementotřískovými na pero a drážku', mj: 'm2', price: '169,00', kind: 'b' },
  { code: '762429001', text: S + 'podkladový rošt', mj: 'm', price: '82,60', kind: 'b' },
  { code: '762430011', text: `${D}tl 10 mm ${SR}`, mj: 'm2', price: '414,00', kind: 'k' },
  { code: '762430011.CDC', text: `${D}CETRIS tl 10 mm ${SR}`, mj: 'm2', price: '413,54', kind: 'g' },
  { code: '762430012', text: `${D}tl 12 mm ${SR}`, mj: 'm2', price: '443,00', kind: 'k' },
  { code: '762430012.CDC', text: `${D}CETRIS tl 12 mm ${SR}`, mj: 'm2', price: '441,66', kind: 'g' },
  { code: '762430013', text: `${D}tl 14 mm ${SR}`, mj: 'm2', price: '506,00', kind: 'k' },
  { code: '762430013.CDC', text: `${D}CETRIS tl 14 mm ${SR}`, mj: 'm2', price: '503,80', kind: 'g' },
  { code: '762430014', text: `${D}tl 16 mm ${SR}`, mj: 'm2', price: '561,00', kind: 'k' },
  { code: '762430014.CDC', text: `${D}CETRIS tl 16 mm ${SR}`, mj: 'm2', price: '558,52', kind: 'g' },
  { code: '762430015', text: `${D}tl 18 mm ${SR}`, mj: 'm2', price: '615,00', kind: 'k' },
  { code: '762430015.CDC', text: `${D}CETRIS tl 18 mm ${SR}`, mj: 'm2', price: '', kind: 'g' },
];

const P = 'deska dřevovláknitá tvrdá HDF jednostranně lakovaná ';
const LINKED = [
  ['60711540', P + 'bílá 101, 2070x2800mm tl 3mm'],
  ['60711541', P + 'černá 190, 2070x2800mm tl 3mm'],
  ['60711542', P + 'šedá 112, 2070x2800mm tl 3mm'],
  ['60711543', P + 'ořech 729, 2070x2800mm tl 3mm'],
  ['60711544', P + 'wenge 854, 2070x2800mm tl 3mm'],
  ['60711545', P + 'třešeň 344, 2070x2800mm tl 3mm'],
  ['60711546', P + 'calvados 1792, 2070x2800mm tl 3mm'],
  ['60711547', P + 'javor 375 (imitace), 2070x2800mm tl 3mm'],
  ['60711548', P + 'stříbrná 881, 2070x2800mm tl 3mm'],
  ['60711551', P + 'dub přírodní světlý, 2090x2800mm tl 2,5mm'],
];

const colorOf = (kind: string) => (kind === 'g' ? GREEN : '#111');

/* ─── Page ──────────────────────────── */

export default function App() {
  return (
    <Root>
      <Global />
      <TitleBar>
        <Qat>
          <QatCombo>
            Položky HSV, PSV
            <ComboArrow />
          </QatCombo>
          <QatSlot $w={18}>
            <FilterCheckIcon />
          </QatSlot>
          <QatSlot $w={12}>
            <Caret />
          </QatSlot>
          <QatSlot $w={7} />
          <QatSlot $w={47} $on>
            <BinocularsIcon />
            <SplitIcon />
          </QatSlot>
          <QatSlot $w={26}>
            <TreeDisabledIcon />
          </QatSlot>
          <QatSlot $w={14}>
            <Caret $c="#2a86cc" />
          </QatSlot>
          <QatSlot $w={22}>
            <CheckboxQatIcon />
          </QatSlot>
          <QatSlot $w={26}>
            <ExportIcon />
          </QatSlot>
          <QatSlot $w={14}>
            <Caret />
          </QatSlot>
          <QatSlot $w={12}>
            <Caret $c="#fff" />
          </QatSlot>
        </Qat>
        <WindowTitle>euroCALC 4 - Výchozí</WindowTitle>
        <WindowControls>
          <WinBtn $w={46}>
            <HelpGlyph />
          </WinBtn>
          <WinBtn $w={46}>
            <PinGlyph />
          </WinBtn>
          <WinBtn $w={46}>
            <MinGlyph />
          </WinBtn>
          <WinBtn $w={46}>
            <RestoreGlyph />
          </WinBtn>
          <WinBtn $w={46}>
            <CloseGlyph />
          </WinBtn>
        </WindowControls>
      </TitleBar>

      <TabStrip>
        <RibbonTab $w={94}>euroCALC</RibbonTab>
        <RibbonTab $w={135} $active>
          Oceňovací podklady
        </RibbonTab>
        <RibbonTab $w={80}>Zobrazení</RibbonTab>
        <RibbonTab $w={78}>Nápověda</RibbonTab>
        <UserName>
          Jan Hercog
          <Caret $c="#111" />
        </UserName>
      </TabStrip>

      <Ribbon>
        <Group $w={336} $pad={5}>
          <GroupBody>
            <RibbonBtn $w={48}>
              <BtnIcon>
                <PlusIcon />
              </BtnIcon>
              Přidat
            </RibbonBtn>
            <RibbonBtn $w={72}>
              <BtnIcon>
                <CopyIcon />
              </BtnIcon>
              Zkopírovat
            </RibbonBtn>
            <RibbonBtn $w={70}>
              <BtnIcon>
                <PencilIcon />
              </BtnIcon>
              Vlastnosti
            </RibbonBtn>
            <RibbonBtn $w={60}>
              <BtnIcon>
                <CrossIcon />
              </BtnIcon>
              Odstranit
            </RibbonBtn>
            <RibbonBtn $w={76}>
              <BtnIcon>
                <BulkPencilIcon />
              </BtnIcon>
              {'Upravit\nhromadně'}
            </RibbonBtn>
          </GroupBody>
          <GroupLabel>Položky</GroupLabel>
        </Group>

        <Group $w={391}>
          <GroupBody>
            <CuBlock>
              <CuRow>
                <CuLabel>CÚ</CuLabel>
                <CuCombo>
                  22-I
                  <ComboArrow />
                </CuCombo>
              </CuRow>
              <CuRow>
                <CuAction $w={75}>
                  <SaveIcon />
                  Uložit CÚ
                </CuAction>
                <CuAction $w={75}>
                  <LoadIcon />
                  Načíst CÚ
                </CuAction>
              </CuRow>
            </CuBlock>
            <InnerSep />
            <RibbonBtn $w={3} />
            <RibbonBtn $w={62}>
              <BtnIcon>
                <CsIcon />
              </BtnIcon>
              {'Novinky\nv CS ÚRS'}
            </RibbonBtn>
            <RibbonBtn $w={76}>
              <BtnIcon>
                <DownloadIcon />
              </BtnIcon>
              {'Stáhnout\naktualizace'}
            </RibbonBtn>
            <RibbonBtn $w={80}>
              <BtnIcon>
                <RefreshBookIcon />
              </BtnIcon>
              {'Aktualizovat\nCÚ ▾'}
            </RibbonBtn>
          </GroupBody>
          <GroupLabel>Cenová úroveň</GroupLabel>
        </Group>

        <Group $w={400} $pad={3}>
          <GroupBody>
            <RibbonBtn $w={90}>
              <BtnIcon>
                <SortIcon />
              </BtnIcon>
              {'Upravit\ntřídicí kritéria'}
            </RibbonBtn>
            <InnerSep />
            <RibbonBtn $w={1} />
            <RibbonBtn $w={64}>
              <BtnIcon>
                <RepriceIcon />
              </BtnIcon>
              {'Přecenit\nCÚ'}
            </RibbonBtn>
            <RibbonBtn $w={68}>
              <BtnIcon>
                <WeightIcon />
              </BtnIcon>
              {'Upravit\nhmotnosti'}
            </RibbonBtn>
            <RibbonBtn $w={58}>
              <BtnIcon>
                <CompositionIcon />
              </BtnIcon>
              {'Upravit\nskladbu'}
            </RibbonBtn>
            <RibbonBtn $w={54}>
              <BtnIcon>
                <RatesIcon />
              </BtnIcon>
              {'Upravit\nsazby'}
            </RibbonBtn>
            <RibbonBtn $w={54}>
              <BtnIcon>
                <ChangeBookIcon />
              </BtnIcon>
              {'Změnit\nkatalog'}
            </RibbonBtn>
          </GroupBody>
          <GroupLabel>Hromadné úpravy</GroupLabel>
        </Group>
        <CollapseBtn>
          <DoubleUp />
        </CollapseBtn>
      </Ribbon>

      <PanelHead>
        <PanelTab>Panely</PanelTab>
      </PanelHead>

      <Body>
        <Sidebar>
          <SideHeader>
            Oceňovací podklady
            <svg width="9" height="12" viewBox="0 0 9 12">
              <path d="M7 1L2 6l5 5" fill="none" stroke="#555" strokeWidth="1.8" />
            </svg>
          </SideHeader>
          <Tree>
            {TREE.map((item) => (
              <TreeRow key={item.label} $level={item.level}>
                <TreeArrow $state={item.state} />
                <TreeIcon>{item.icon}</TreeIcon>
                <TreeText $sel={item.selected}>{item.label}</TreeText>
              </TreeRow>
            ))}
          </Tree>
          <SplitDots>······</SplitDots>
          <SideNav>
            {NAV.map((n) => (
              <NavItem key={n.label} $active={n.active}>
                <NavIcon>{n.icon}</NavIcon>
                {n.label}
              </NavItem>
            ))}
          </SideNav>
          <NavFooter>
            <NavDot />
            <NavDot />
            <NavDot />
          </NavFooter>
          <GripV>
            <i />
            <i />
            <i />
          </GripV>
        </Sidebar>

        <Main>
          <TopPanel>
            <TopLeft>
              <SearchZone>
                <SearchBox>Zadejte hledaný výraz...</SearchBox>
              </SearchZone>
              <HeadRow $cols={TOP_COLS} $h={40}>
                <StarCell>❋</StarCell>
                <HeadCell />
                <HeadCell $top>Kód položky</HeadCell>
                <HeadCell $top>Popis položky</HeadCell>
                <HeadCell $top>MJ</HeadCell>
                <HeadCell $top>Katalogová cena</HeadCell>
                <HeadCell $top>Oblíbená</HeadCell>
                <HeadCell $top>Kód ceníku</HeadCell>
              </HeadRow>
              <Rows $h={359}>
                {ITEMS.map((it, i) => {
                  const sel = i === 1;
                  const c = colorOf(it.kind);
                  return (
                    <Row key={it.code} $cols={TOP_COLS}>
                      <Indicator $mark={sel} />
                      <CheckCell $bg={sel ? SEL : undefined}>
                        <Check />
                      </CheckCell>
                      <Cell $c={it.kind === 'b' ? BROWN : c} $focus={sel} $drop={sel ? 0 : 1}>
                        {it.code}
                      </Cell>
                      <Cell $c={sel ? '#fff' : c} $bg={sel ? SEL : undefined}>
                        {it.text}
                      </Cell>
                      <Cell $c={sel ? '#fff' : c} $bg={sel ? SEL : undefined} $align="center">
                        {it.mj}
                      </Cell>
                      <Cell $c={sel ? '#fff' : c} $bg={sel ? SEL : undefined} $align="right" $drop={2}>
                        {it.price}
                      </Cell>
                      <CheckCenter $bg={sel ? SEL : undefined}>
                        <Check />
                      </CheckCenter>
                      <Cell $c={sel ? '#fff' : c} $bg={sel ? SEL : undefined} $drop={2}>
                        762A01
                      </Cell>
                    </Row>
                  );
                })}
              </Rows>
              <FillBar />
            </TopLeft>
            <Scrollbar>
              <ScrollArrow>
                <Chev d="M1 5l3-3 3 3" />
              </ScrollArrow>
              <ScrollThumb />
              <ScrollArrow $down>
                <Chev d="M1 1l3 3 3-3" />
              </ScrollArrow>
            </Scrollbar>
          </TopPanel>

          <DotsRow>······</DotsRow>
          <DetailTabs>
            <DetailTab $w={53}>Skladba</DetailTab>
            <DetailTab $w={81}>Třídicí kritéria</DetailTab>
            <DetailTab $w={79}>Texty položek</DetailTab>
            <DetailTab $w={51}>Obrázky</DetailTab>
            <DetailTab $w={90} $marked>
              Návazné položky
            </DetailTab>
          </DetailTabs>

          <DetailFrame>
            <DetailInner>
              <HeadRow $cols={DETAIL_COLS} $h={23}>
                <StarCell>❋</StarCell>
                <HeadCell>Kód položky</HeadCell>
                <HeadCell>Popis TK</HeadCell>
                <HeadCell>MJ</HeadCell>
              </HeadRow>
              {LINKED.map(([code, text], i) => (
                <Row key={code} $cols={DETAIL_COLS}>
                  <Indicator $mark={i === 0} />
                  <Cell $size={12.35}>{code}</Cell>
                  <Cell $size={12.35} $bg={i === 0 ? '#d5e5fb' : undefined}>
                    {text}
                  </Cell>
                  <Cell $size={12.35} $bg={i === 0 ? '#d5e5fb' : undefined} $align="center">
                    m2
                  </Cell>
                </Row>
              ))}
            </DetailInner>
          </DetailFrame>

          <HelpPanel>
            <HelpMark>?</HelpMark>
            <HelpText>
              Zobrazuje seznam položek z nestrukturovaného katalogu.
              <br />
              Položky, jejichž kód je uveden hnědou barvou, mají příznak "Návaznost". To znamená, že v rozpočtu je možné k nim vyhledat návaznou položku pomocí akce Přidat návazné položky.
              <br />
              V zobrazení je dostupný Vyhledávací panel. Zapište do něj výraz, který chcete vyhledat a dohledané položky se ihned vyfiltrují. Pokud chcete hledat kombinaci slov, pak zapište k druhému slovu znaménko "+". Více se dočtete v nápovědě [F1] v článku Vyhledávací panel.
            </HelpText>
          </HelpPanel>

          <StatusBar>
            <StatusText $w={98}>Celkem: 11 035</StatusText>
            <StatusText $w={80}>Označeno: 0</StatusText>
            <DetailBtn>
              <MagnifierIcon />
              Detaily
            </DetailBtn>
            <GuideBtn>
              <GuideMark>?</GuideMark>
              Stručný návod
            </GuideBtn>
          </StatusBar>
        </Main>
      </Body>
      <BottomEdge />
    </Root>
  );
}
